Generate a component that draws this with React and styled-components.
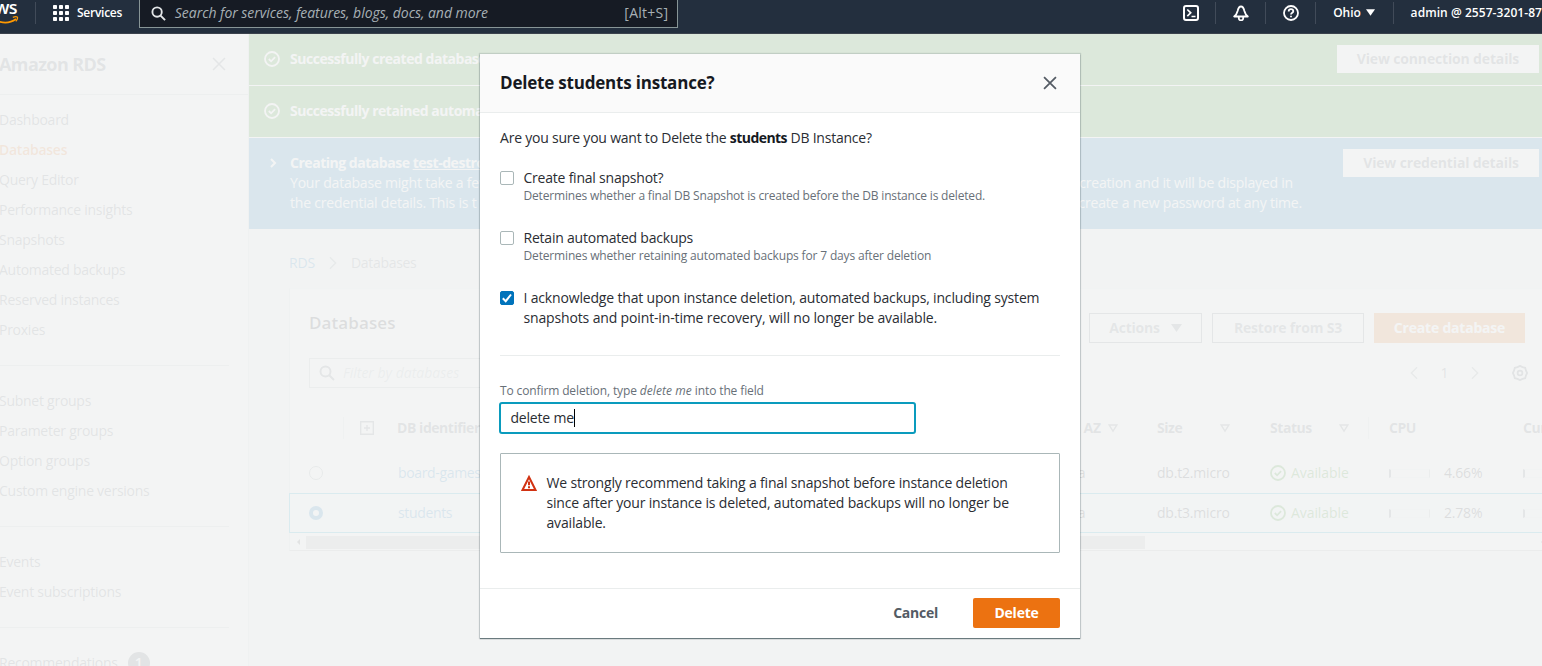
import React from "react";
import styled, { createGlobalStyle } from "styled-components";

const Global = createGlobalStyle`
  * { box-sizing: border-box; }
  html, body { margin: 0; height: 666px; overflow: hidden; }
  body {
    background: #f2f3f3;
    color: #16191f;
    font: 400 14px/20px "Open Sans", "Noto Sans", sans-serif;
    letter-spacing: -0.2px;
  }
  svg { display: block; flex: none; }
`;

const Page = styled.div`
  position: relative;
  width: 1542px;
  height: 666px;
  overflow: hidden;
  white-space: nowrap;
`;

const Text = styled.span`
  color: ${(p) => p.$color || "inherit"};
  font-weight: ${(p) => p.$weight || "inherit"};
  font-style: ${(p) => (p.$italic ? "italic" : "inherit")};
  letter-spacing: ${(p) => (p.$ls === undefined ? "inherit" : `${p.$ls}px`)};
`;

/* ---------- top navigation ---------- */

const TopNav = styled.header`
  display: flex;
  align-items: center;
  height: 34px;
  padding-bottom: 8px;
  background: #232f3e;
  border-bottom: 1px solid #3b424d;
  color: #fff;
  font-size: 12px;
  font-weight: 600;
`;

const Logo = styled.div`
  width: 35px;
  height: 26px;
  display: flex;
  flex-direction: column;
  overflow: hidden;
`;

const LogoWord = styled.span`
  width: 18px;
  height: 16px;
  display: flex;
  justify-content: flex-end;
  margin-left: -1px;
  font-size: 18px;
  line-height: 15px;
  font-weight: 600;
  letter-spacing: -0.6px;
`;

const NavDivider = styled.i`
  flex: none;
  width: 1px;
  height: 22px;
  background: #414b59;
`;

const ServicesMenu = styled.div`
  display: flex;
  align-items: center;
  gap: 8px;
  width: 103px;
  padding-left: 17px;
`;

const SearchBox = styled.div`
  align-self: flex-start;
  display: flex;
  align-items: center;
  width: 540px;
  height: 28px;
  padding: 0 9px 1px 11px;
  background: #161b24;
  border: 1px solid #879596;
  border-top: 0;
  color: #a7b0b5;
  font-size: 14px;
  font-weight: 400;
`;

const SearchPlaceholder = styled.span`
  flex: 1;
  margin-left: 9px;
  font-style: italic;
  letter-spacing: -0.04px;
`;

const NavTools = styled.div`
  display: flex;
  align-items: center;
  flex: none;
  margin-left: 505px;
`;

const NavTool = styled.div`
  display: flex;
  align-items: center;
  gap: 5px;
  padding: 0 ${(p) => p.$right ?? 16}px 0 ${(p) => p.$left ?? 17}px;
`;

/* ---------- side navigation ---------- */

const Body = styled.div`
  display: flex;
  height: 632px;
`;

const SideNav = styled.nav`
  flex: none;
  width: 249px;
  background: #fff;
  border-right: 1px solid #d5dbdb;
  color: #545b64;
`;

const SideHead = styled.div`
  display: flex;
  align-items: center;
  justify-content: space-between;
  height: 61px;
  padding: 0 22px 1px 0;
  border-bottom: 1px solid #c2c8c8;
  font-size: 18px;
  font-weight: 700;
  letter-spacing: -0.6px;
`;

const SideTitle = styled.span`
  margin-left: -1px;
`;

const SideGroup = styled.div`
  width: 229px;
  padding: ${(p) => (p.$first ? 10 : 20)}px 0 20px;
  border-bottom: 1px solid #c2c8c8;
`;

const SideItem = styled.div`
  display: flex;
  align-items: center;
  gap: 10px;
  height: 30px;
  margin-left: -1px;
  letter-spacing: -0.26px;
  color: ${(p) => (p.$active ? "#ec7211" : "inherit")};
  font-weight: ${(p) => (p.$active ? 600 : 400)};
`;

const Count = styled.span`
  width: 22px;
  height: 22px;
  border-radius: 50%;
  background: #545b64;
  color: #fff;
  text-align: center;
  font-weight: 600;
  line-height: 22px;
`;

/* ---------- main column ---------- */

const Main = styled.main`
  flex: none;
  width: 1293px;
  overflow: hidden;
`;

const Flash = styled.div`
  display: flex;
  align-items: flex-start;
  height: ${(p) => (p.$tall ? 91 : 52)}px;
  padding: 11px 3px 0 15px;
  background: ${(p) => (p.$tall ? "#0073bb" : "#1d8102")};
  border-bottom: ${(p) => (p.$tall ? "0" : "1px solid #fff")};
  color: #fff;
`;

const FlashIcon = styled.span`
  width: 26px;
  padding-top: 6px;
`;

const FlashCopy = styled.div`
  width: 1012px;
  padding-top: 4px;
  letter-spacing: -0.2px;
`;

const FlashTitle = styled.div`
  font-weight: 700;
  letter-spacing: -0.47px;
`;

const FlashLine = styled.div`
  display: flex;
  justify-content: space-between;
  width: ${(p) => p.$width}px;
`;

const FlashButton = styled.span`
  width: ${(p) => p.$width}px;
  height: 28px;
  margin-left: auto;
  background: #fff;
  color: #545b64;
  text-align: center;
  font-weight: 700;
  line-height: 28px;
  letter-spacing: -0.16px;
`;

const Breadcrumbs = styled.div`
  display: flex;
  align-items: center;
  gap: 11px;
  height: 20px;
  margin: 24px 0 15px 40px;
  color: #687078;
`;

const Panel = styled.section`
  width: 1262px;
  height: 263px;
  margin-left: 40px;
  background: #fff;
  border: 1px solid #d5dbdb;
  border-top-color: #eaeded;
  border-bottom-color: #a9b1b1;
`;

const PanelHead = styled.div`
  display: flex;
  align-items: center;
  gap: 10px;
  height: 30px;
  margin: 24px 25px 0 19px;
`;

const PanelTitle = styled.h2`
  flex: 1;
  margin: -10px 0 0;
  color: #16191f;
  font-size: 17px;
  font-weight: 600;
  letter-spacing: 0.1px;
`;

const PanelButton = styled.span`
  display: flex;
  align-items: center;
  justify-content: center;
  gap: 11px;
  width: ${(p) => p.$width}px;
  height: 30px;
  border: 1px solid ${(p) => (p.$primary ? "#ec7211" : "#687078")};
  background: ${(p) => (p.$primary ? "#ec7211" : "#fff")};
  color: ${(p) => (p.$primary ? "#fff" : "#687078")};
  font-weight: 700;
  letter-spacing: -0.2px;
`;

const FilterRow = styled.div`
  display: flex;
  align-items: center;
  justify-content: space-between;
  height: 30px;
  margin: 15px 22px 0 19px;
`;

const FilterInput = styled.div`
  display: flex;
  align-items: center;
  gap: 8px;
  width: 600px;
  height: 30px;
  padding-left: 9px;
  border: 1px solid #aab7b8;
  color: #aab7b8;
  font-style: italic;
  letter-spacing: 0;
`;

const Pager = styled.div`
  display: flex;
  align-items: center;
  color: #545b64;
`;

const PageNumber = styled.span`
  width: 47px;
  text-align: center;
`;

const SettingsSlot = styled.span`
  margin-left: 30px;
`;

const Row = styled.div`
  display: grid;
  grid-template-columns: 53px 54px 622px 138px 113px 119px 134px 40px;
  align-items: center;
  height: 40px;
  margin: 0 -1px;
  border: 1px solid ${(p) => (p.$selected ? "#00a1c9" : "transparent")};
  background: ${(p) => (p.$selected ? "#f1faff" : "transparent")};
`;

const HeadRow = styled(Row)`
  margin-top: 20px;
  margin-bottom: 5px;
  color: #545b64;
  font-weight: 700;
  letter-spacing: -0.45px;
`;

const Cell = styled.div`
  display: flex;
  align-items: center;
  min-width: 0;
  color: ${(p) => p.$color || "inherit"};
  padding-left: ${(p) => p.$pad || 0}px;
  padding-right: ${(p) => p.$right || 0}px;
  gap: ${(p) => p.$gap || 0}px;
  justify-content: ${(p) => (p.$between ? "space-between" : "flex-start")};
`;

const ExpandCell = styled(Cell)`
  height: 22px;
  padding-left: 16px;
  border-left: 1px solid #d5dbdb;
`;

const CpuHead = styled(Cell)`
  height: 22px;
  margin-left: -21px;
  padding-left: 20px;
  border-left: 1px solid #d5dbdb;
`;

const Radio = styled.i`
  width: 14px;
  height: 14px;
  margin-left: 19px;
  border-radius: 50%;
  background: #fff;
  border: ${(p) => (p.$on ? "4px solid #0073bb" : "1px solid #879596")};
`;

const Meter = styled.i`
  flex: none;
  width: 41px;
  height: 9px;
  margin-right: 14px;
  border: 1px solid #eaeded;
  border-left: 2px solid #687078;
  border-right: 1px solid #aab7b8;
`;

const Scroller = styled.div`
  display: flex;
  align-items: center;
  gap: 5px;
  height: 14px;
  margin-top: 2px;
  padding: 0 5px 0 6px;
`;

const Thumb = styled.i`
  width: 839px;
  height: 13px;
  margin-right: auto;
  background: #b8b8b8;
`;

const Veil = styled.div`
  position: absolute;
  inset: 34px 0 0;
  background: rgba(242, 243, 243, 0.9);
`;

/* ---------- dialog ---------- */

const Dialog = styled.section`
  position: absolute;
  left: 480px;
  top: 54px;
  width: 600px;
  height: 584px;
  display: flex;
  flex-direction: column;
  background: #fff;
  box-shadow: 0 1px 1px 0 rgba(0, 28, 36, 0.5), 0 0 1px 1px rgba(0, 28, 36, 0.12);
`;

const DialogHead = styled.div`
  display: flex;
  align-items: center;
  justify-content: space-between;
  height: 59px;
  padding: 0 23px 0 20px;
  background: #fafafa;
  border-bottom: 1px solid #eaeded;
`;

const DialogTitle = styled.h1`
  margin: 0;
  font-size: 17px;
  font-weight: 700;
  line-height: 22px;
  letter-spacing: -0.2px;
`;

const DialogBody = styled.div`
  flex: 1;
  padding: 15px 20px 0;
  color: #2a2d33;
`;

const Question = styled.p`
  margin: 0 0 20px;
  letter-spacing: -0.22px;
`;

const Option = styled.label`
  display: flex;
  gap: 9.5px;
  height: 60px;
`;

const OptionCopy = styled.div`
  flex: 1;
  letter-spacing: ${(p) => p.$ls || -0.22}px;
`;

const CheckBox = styled.span`
  display: flex;
  align-items: center;
  justify-content: center;
  width: 14px;
  height: 14px;
  margin-top: 3px;
  border: 1px solid ${(p) => (p.$on ? "#0073bb" : "#aab7b8")};
  border-radius: 2px;
  background: ${(p) => (p.$on ? "#0073bb" : "#fff")};
`;

const Hint = styled.div`
  color: #687078;
  font-size: 12px;
  line-height: 16px;
  letter-spacing: ${(p) => p.$ls || -0.175}px;
`;

const Rule = styled.hr`
  height: 1px;
  margin: 7px 0 27px;
  border: 0;
  background: #eaeded;
`;

const ConfirmField = styled.div`
  display: flex;
  align-items: center;
  width: 417px;
  height: 32px;
  margin: 3px 0 19px -1px;
  padding-left: 9.5px;
  border: 2px solid #0a9bbd;
  border-radius: 3px;
`;

const Caret = styled.i`
  width: 1px;
  height: 18px;
  background: #000;
`;

const Warning = styled.div`
  display: flex;
  gap: 9.5px;
  height: 100px;
  padding: 19px 20px;
  border: 1px solid #aab7b8;
  border-radius: 1px;
`;

const WarningIcon = styled.span`
  padding-top: 2px;
`;

const WarningCopy = styled.div`
  letter-spacing: -0.17px;
`;

const DialogFoot = styled.div`
  display: flex;
  align-items: center;
  justify-content: flex-end;
  gap: 35px;
  height: 50px;
  padding: 0 20px 1px 0;
  border-top: 1px solid #eaeded;
  font-weight: 700;
  letter-spacing: -0.25px;
`;

const DeleteButton = styled.span`
  width: 87px;
  height: 30px;
  border-radius: 2px;
  background: #ec7211;
  color: #fff;
  text-align: center;
  line-height: 30px;
`;

/* ---------- icons ---------- */

const Icon = ({ size = 16, color = "currentColor", width = 2, children }) => (
  <svg width={size} height={size} viewBox="0 0 16 16" fill="none" stroke={color} strokeWidth={width}>
    {children}
  </svg>
);

const Magnifier = ({ color, size = 16 }) => (
  <Icon color={color} size={size}>
    <circle cx="6.5" cy="6.5" r="5" />
    <path d="M10.2 10.2 15 15" />
  </Icon>
);

const CheckCircle = ({ color }) => (
  <Icon color={color} width={1.8}>
    <circle cx="8" cy="8" r="7" />
    <path d="m4.8 8 2.3 2.3 4-4.2" />
  </Icon>
);

const Cross = ({ size = 14, color = "#545b64", width = 2 }) => (
  <Icon size={size} color={color} width={width}>
    <path d="m1.2 1.2 13.600 13.600m0-13.600-13.600 13.600" />
  </Icon>
);

const Chevron = ({ flip, color, width = 1.6, size = 16 }) => (
  <Icon color={color} width={width} size={size}>
    <path d={flip ? "M11.5 1.5 5 8l6.500 6.500" : "M4.500 1.500 11 8l-6.500 6.500"} />
  </Icon>
);

const SortIcon = () => (
  <svg width="10" height="9" viewBox="0 0 10 9" fill="none" stroke="#687078" strokeWidth="1.4">
    <path d="M1.200 1h7.600L5 7.200z" />
  </svg>
);

const SolidCaret = ({ w = 11, h = 8 }) => (
  <svg width={w} height={h} viewBox="0 0 11 8" fill="currentColor">
    <path d="M0 0h11L5.500 8z" />
  </svg>
);

const ScrollArrow = () => (
  <svg width="5" height="6" viewBox="0 0 5 6" fill="#505050">
    <path d="M4 0v6L1 3z" />
  </svg>
);

const DbRow = ({ name, size, cpu, selected }) => (
  <Row $selected={selected}>
    <Radio $on={selected} />
    <Cell />
    <Cell $color="#0073bb" $pad={1}>
      <Text $ls={-0.35}>{name}</Text>
    </Cell>
    <Cell $pad={1}>us-east-2a</Cell>
    <Cell>{size}</Cell>
    <Cell $color="#1d8102" $gap={5}>
      <CheckCircle color="#1d8102" />
      <Text $ls={-0.08}>Available</Text>
    </Cell>
    <Cell>
      <Meter />
      {cpu}
    </Cell>
    <Cell>
      <Meter />
    </Cell>
  </Row>
);

export default function App() {
  return (
    <Page>
      <Global />
      <TopNav>
        <Logo>
          <LogoWord>ws</LogoWord>
          <svg width="19" height="9" viewBox="0 0 19 9" fill="none" stroke="#ff9900" strokeWidth="1.6">
            <path d="M-4 4.500C4 8 11 6.700 16 3" />
            <path d="M12.800 1.300c2-.7 4-.6 4.500-.2.400.6-.1 2.600-1.500 4.300" strokeWidth="1.3" />
          </svg>
        </Logo>
        <NavDivider />
        <ServicesMenu>
          <svg width="16" height="16" viewBox="0 0 16 16" fill="#fff">
            {[0, 6, 12].map((y) =>
              [0, 6, 12].map((x) => <rect key={`${x}-${y}`} x={x} y={y} width="4" height="4" rx="0.8" />)
            )}
          </svg>
          <Text $ls={-0.25}>Services</Text>
        </ServicesMenu>
        <SearchBox>
          <Magnifier color="#e3e6e8" size={15} />
          <SearchPlaceholder>Search for services, features, blogs, docs, and more</SearchPlaceholder>
          <Text $ls={0.25}>[Alt+S]</Text>
        </SearchBox>
        <NavTools>
          <Icon>
            <rect x="1" y="1" width="14" height="14" rx="2" />
            <path d="m4.300 4.500 3.400 3.300-3.400 3.300M8.500 11.500h4" strokeWidth="1.7" />
          </Icon>
          <NavTool $left={16} $right={0}>
            <NavDivider />
          </NavTool>
          <NavTool>
            <Icon width={1.8}>
              <path d="M1.200 11.500h13.600C12.700 9.800 12 8.400 11.400 6 10.800 3.200 9.600 1.500 8 1.500S5.200 3.200 4.600 6C4 8.400 3.300 9.800 1.200 11.500z" strokeLinejoin="round" />
              <path d="M5.800 12v1.200C5.800 14.500 6.600 15.300 8 15.300s2.200-.8 2.200-2.100V12" />
            </Icon>
          </NavTool>
          <NavDivider />
          <NavTool>
            <Icon width={1.8}>
              <circle cx="8" cy="8" r="7" />
              <path d="M5.700 6.500C5.700 5 6.700 4.200 8 4.200s2.300.8 2.300 2C10.300 7.700 8 7.800 8 9.600M8 10.800v1.500" />
            </Icon>
          </NavTool>
          <NavDivider />
          <NavTool $right={18}>
            <Text $ls={-0.1}>Ohio</Text>
            <SolidCaret w={9} h={7} />
          </NavTool>
          <NavDivider />
          <NavTool $right={0}>
            <Text $ls={0.06}>admin @ 2557-3201-87</Text>
          </NavTool>
        </NavTools>
      </TopNav>

      <Body>
        <SideNav>
          <SideHead>
            <SideTitle>Amazon RDS</SideTitle>
            <Cross color="#687078" width={1.8} />
          </SideHead>
          <SideGroup $first>
            <SideItem>Dashboard</SideItem>
            <SideItem $active>Databases</SideItem>
            <SideItem>Query Editor</SideItem>
            <SideItem>Performance insights</SideItem>
            <SideItem>Snapshots</SideItem>
            <SideItem>Automated backups</SideItem>
            <SideItem>Reserved instances</SideItem>
            <SideItem>Proxies</SideItem>
          </SideGroup>
          <SideGroup>
            <SideItem>Subnet groups</SideItem>
            <SideItem>Parameter groups</SideItem>
            <SideItem>Option groups</SideItem>
            <SideItem>Custom engine versions</SideItem>
          </SideGroup>
          <SideGroup>
            <SideItem>Events</SideItem>
            <SideItem>Event subscriptions</SideItem>
          </SideGroup>
          <SideGroup>
            <SideItem>
              Recommendations <Count>1</Count>
            </SideItem>
          </SideGroup>
        </SideNav>

        <Main>
          <Flash>
            <FlashIcon>
              <CheckCircle />
            </FlashIcon>
            <FlashCopy>
              <FlashTitle>Successfully created database</FlashTitle>
            </FlashCopy>
            <FlashButton $width={202}>View connection details</FlashButton>
          </Flash>
          <Flash>
            <FlashIcon>
              <CheckCircle />
            </FlashIcon>
            <FlashCopy>
              <FlashTitle>Successfully retained automa</FlashTitle>
            </FlashCopy>
          </Flash>
          <Flash $tall>
            <FlashIcon>
              <Icon>
                <path d="m7 4 4 4-4 4" />
              </Icon>
            </FlashIcon>
            <FlashCopy>
              <FlashTitle>
                Creating database <u>test-destro</u>
              </FlashTitle>
              <FlashLine $width={1003}>
                <span>Your database might take a few</span>
                <span>creation and it will be displayed in</span>
              </FlashLine>
              <FlashLine $width={1012}>
                <span>the credential details. This is t</span>
                <span>create a new password at any time.</span>
              </FlashLine>
            </FlashCopy>
            <FlashButton $width={196}>View credential details</FlashButton>
          </Flash>

          <Breadcrumbs>
            <Text $color="#0073bb">RDS</Text>
            <Chevron size={14} color="#879596" />
            <Text $ls={-0.3}>Databases</Text>
          </Breadcrumbs>

          <Panel>
            <PanelHead>
              <PanelTitle>Databases</PanelTitle>
              <PanelButton $width={113}>
                Actions <SolidCaret />
              </PanelButton>
              <PanelButton $width={152}>Restore from S3</PanelButton>
              <PanelButton $width={151} $primary>
                Create database
              </PanelButton>
            </PanelHead>
            <FilterRow>
              <FilterInput>
                <Magnifier color="#687078" />
                Filter by databases
              </FilterInput>
              <Pager>
                <Chevron flip size={14} color="#879596" />
                <PageNumber>1</PageNumber>
                <Chevron size={14} color="#879596" />
                <SettingsSlot>
                  <Icon width={1.8} color="#545b64">
                    <path d="m8 .9 2.500 1.200 2.700.700.700 2.700L15.100 8l-1.200 2.500-.700 2.700-2.700.700L8 15.100l-2.500-1.200-2.700-.700-.700-2.700L.9 8l1.200-2.500.700-2.700 2.700-.700z" />
                    <circle cx="8" cy="8" r="2.4" />
                  </Icon>
                </SettingsSlot>
              </Pager>
            </FilterRow>
            <HeadRow>
              <Cell />
              <ExpandCell>
                <svg width="14" height="14" viewBox="0 0 14 14" fill="none" stroke="#687078" strokeWidth="1.4">
                  <path d="M.7.700h12.600v12.600H.7zM4 7h6M7 4v6" />
                </svg>
              </ExpandCell>
              <Cell>DB identifier</Cell>
              <Cell $gap={7} $pad={1}>
                <Text $ls={-0.2}>Region &amp; AZ</Text>
                <SortIcon />
              </Cell>
              <Cell $between $right={40}>
                Size
                <SortIcon />
              </Cell>
              <Cell $between $right={40}>
                Status
                <SortIcon />
              </Cell>
              <CpuHead>CPU</CpuHead>
              <Cell>Current</Cell>
            </HeadRow>
            <DbRow name="board-games" size="db.t2.micro" cpu="4.66%" />
            <DbRow name="students" size="db.t3.micro" cpu="2.78%" selected />
            <Scroller>
              <ScrollArrow />
              <Thumb />
              <ScrollArrow />
            </Scroller>
          </Panel>
        </Main>
      </Body>

      <Veil />

      <Dialog role="dialog">
        <DialogHead>
          <DialogTitle>Delete students instance?</DialogTitle>
          <Cross />
        </DialogHead>
        <DialogBody>
          <Question>
            Are you sure you want to Delete the{" "}
            <Text $weight={700} $ls={-0.55} $color="#16191f">students</Text> DB Instance?
          </Question>
          <Option>
            <CheckBox />
            <OptionCopy>
              Create final snapshot?
              <Hint>Determines whether a final DB Snapshot is created before the DB instance is deleted.</Hint>
            </OptionCopy>
          </Option>
          <Option>
            <CheckBox />
            <OptionCopy>
              Retain automated backups
              <Hint $ls={-0.16}>Determines whether retaining automated backups for 7 days after deletion</Hint>
            </OptionCopy>
          </Option>
          <Option>
            <CheckBox $on>
              <svg width="12" height="12" viewBox="0 0 12 12" fill="none" stroke="#fff" strokeWidth="2">
                <path d="m1.800 6.300 2.900 2.900L10 2.500" />
              </svg>
            </CheckBox>
            <OptionCopy $ls={-0.17}>
              I acknowledge that upon instance deletion, automated backups, including system
              <br />
              <Text $ls={-0.145}>snapshots and point-in-time recovery, will no longer be available.</Text>
            </OptionCopy>
          </Option>
          <Rule />
          <Hint $ls={-0.12}>
            To confirm deletion, type <Text $italic $ls={0.07}>delete me</Text> into the field
          </Hint>
          <ConfirmField>
            delete me
            <Caret />
          </ConfirmField>
          <Warning>
            <WarningIcon>
              <Icon color="#d13212">
                <path d="M8 2 14.500 15h-13z" />
                <path d="M8 6.500v3.800M8 11.300v2" />
              </Icon>
            </WarningIcon>
            <WarningCopy>
              We strongly recommend taking a final snapshot before instance deletion
              <br />
              since after your instance is deleted, automated backups will no longer be
              <br />
              available.
            </WarningCopy>
          </Warning>
        </DialogBody>
        <DialogFoot>
          <Text $color="#545b64">Cancel</Text>
          <DeleteButton>Delete</DeleteButton>
        </DialogFoot>
      </Dialog>
    </Page>
  );
}
